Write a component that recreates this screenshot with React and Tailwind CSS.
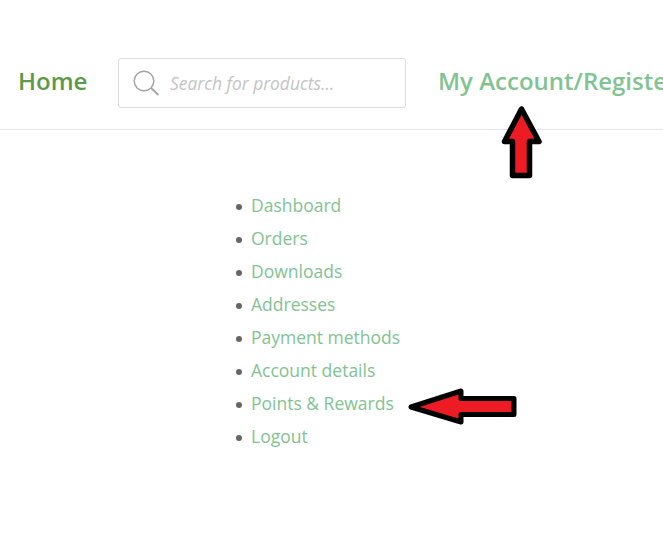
const links = ['Dashboard', 'Orders', 'Downloads', 'Addresses', 'Payment methods', 'Account details', 'Points & Rewards', 'Logout']

function SearchIcon() {
  return (
    <svg width="27" height="26" viewBox="0 0 27 26" fill="none" stroke="#a3a3a3" strokeWidth="1.4" className="shrink-0">
      <circle cx="11" cy="11" r="9.8" />
      <path d="M18 18 L25.5 25" strokeWidth="1.8" />
    </svg>
  )
}

function UpArrow() {
  return (
    <svg width="44" height="76" viewBox="0 0 44 76" className="absolute left-[500px] top-[104px]">
      <path d="M21.5 5 L39 37.5 L29.5 37.5 L29.5 71.5 L12.5 71.5 L12.5 37.5 L4.5 37.5 Z" fill="#ed1c24" stroke="#000" strokeWidth="5.5" strokeLinejoin="round" />
    </svg>
  )
}

function LeftArrow() {
  return (
    <svg width="112" height="40" viewBox="0 0 112 40" className="absolute left-[407px] top-[387px]">
      <path d="M4 20 L54 4 L54 11.5 L107 11.5 L107 27.5 L54 27.5 L54 35 Z" fill="#ed1c24" stroke="#000" strokeWidth="5" strokeLinejoin="round" />
    </svg>
  )
}

export default function App() {
  return (
    <div className="relative h-[542px] w-[663px] overflow-hidden bg-white font-['Open_Sans',sans-serif]">
      <header className="flex h-[130px] items-start border-b border-[#e5e5e5] pl-[18px] pt-[58px]">
        <a className="mt-[6px] w-[100px] shrink-0 text-[24px] leading-[34px] font-semibold text-[#5b9a4b]">Home</a>
        <div className="flex h-[50px] w-[288px] shrink-0 items-center gap-[10px] rounded-[3px] border border-[#dcdcdc] pl-[14px]">
          <SearchIcon />
          <span className="text-[17.4px] text-[#c4c4c4] italic">Search for products...</span>
        </div>
        <a className="mt-[6px] ml-[32px] text-[24px] leading-[34px] font-semibold whitespace-nowrap text-[#82c392]">My Account/Register</a>
      </header>
      <ul className="mt-[59px] ml-[236px] text-[17.5px] leading-[33px]">
        {links.map((l) => (
          <li key={l} className="flex items-center gap-[9px]">
            <span className="mt-[2px] h-[6px] w-[6px] rounded-full bg-[#666]" />
            <a className="text-[#82c392]">{l}</a>
          </li>
        ))}
      </ul>
      <UpArrow />
      <LeftArrow />
    </div>
  )
}
